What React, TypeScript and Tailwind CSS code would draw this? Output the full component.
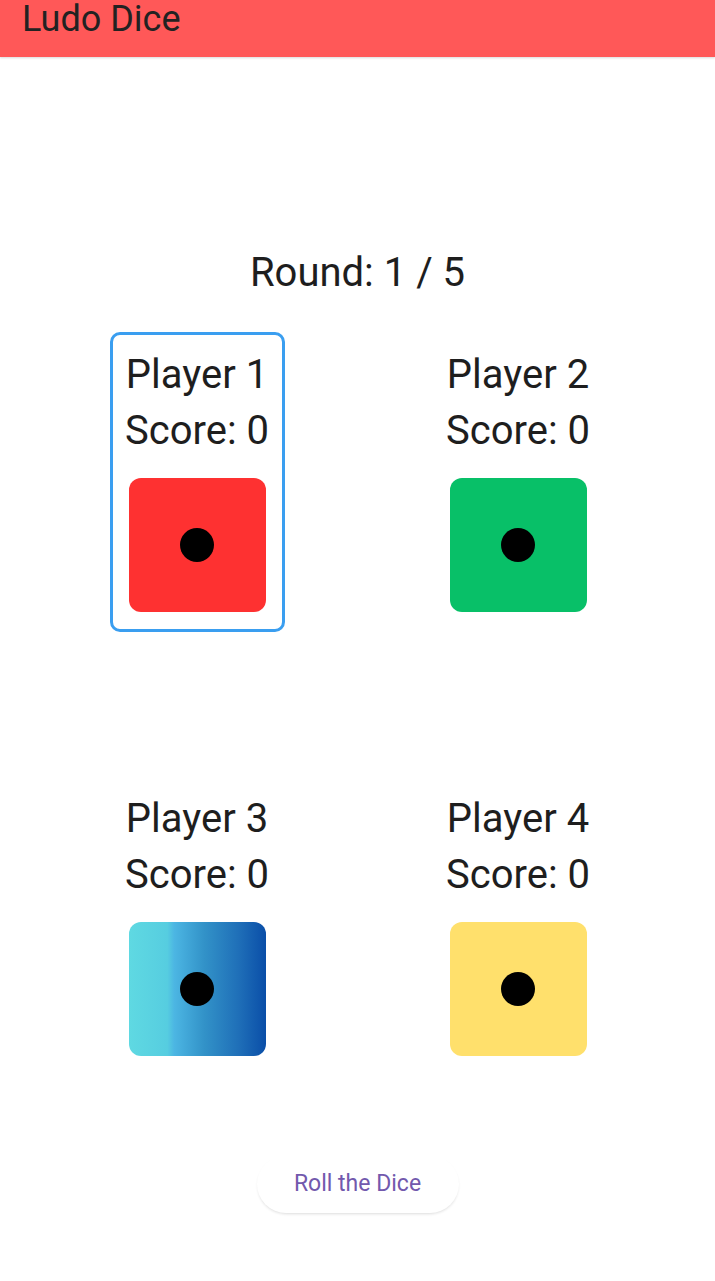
import React from "react";

type Player = { name: string; score: number; dice: string; active?: boolean };

const players: Player[] = [
  { name: "Player 1", score: 0, dice: "bg-[#fe3131]", active: true },
  { name: "Player 2", score: 0, dice: "bg-[#08c068]" },
  { name: "Player 3", score: 0, dice: "bg-[linear-gradient(90deg,#5fd9e2_0%,#56cde0_28%,#4cb6e3_33%,#3292c8_55%,#1f6fb8_80%,#0a4ea8_100%)]" },
  { name: "Player 4", score: 0, dice: "bg-[#ffe06c]" },
];

const PlayerCard = ({ p }: { p: Player }) => (
  <div
    className={`w-[175px] h-[300px] flex flex-col items-center pt-[12px] rounded-[10px] border-[3px] ${
      p.active ? "border-[#3a9ef0]" : "border-transparent"
    }`}
  >
    <div className="text-[40px] leading-[56px] text-[#1e1e1e] whitespace-nowrap">{p.name}</div>
    <div className="text-[40px] leading-[56px] text-[#1e1e1e] whitespace-nowrap">Score: {p.score}</div>
    <div className={`mt-[19px] w-[137px] h-[134px] rounded-[12px] flex items-center justify-center ${p.dice}`}>
      <div className="w-[34px] h-[34px] rounded-full bg-black" />
    </div>
  </div>
);

export default function App() {
  return (
    <div className="w-[715px] h-[1281px] bg-white flex flex-col font-['Roboto',sans-serif]">
      <div className="h-[57px] bg-[#ff5858] flex items-center px-[22px] shadow-[0_1px_2px_rgba(0,0,0,0.15)]">
        <span className="text-[36px] leading-none text-[#222] -mt-[20px]">Ludo Dice</span>
      </div>
      <div className="mt-[192px] text-center text-[40px] leading-[48px] text-[#1e1e1e]">Round: 1 / 5</div>
      <div className="mt-[35px] flex justify-center gap-x-[146px] gap-y-[144px] flex-wrap">
        {players.map((p) => (
          <PlayerCard key={p.name} p={p} />
        ))}
      </div>
      <div className="flex justify-center mt-[79px]">
        <button className="w-[202px] h-[58px] rounded-full bg-white text-[23px] text-[#7259ad] shadow-[0_2px_3px_-1px_rgba(0,0,0,0.14)]">
          Roll the Dice
        </button>
      </div>
    </div>
  );
}
